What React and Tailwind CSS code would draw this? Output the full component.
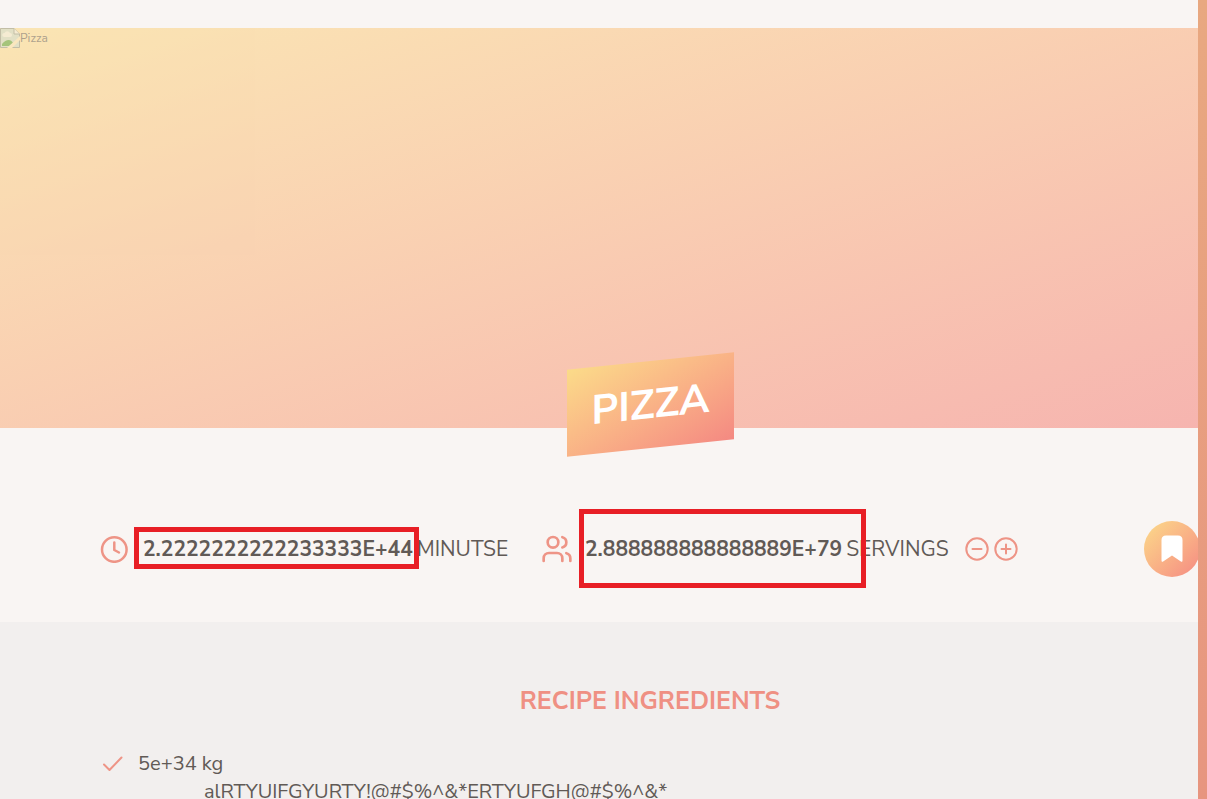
import { Users } from "lucide-react";

function BrokenImage() {
  return (
    <svg viewBox="0 0 20 20" className="h-5 w-5 shrink-0" aria-hidden="true">
      <path d="M.5.5H14L19.500 6v13.500H.5z" fill="#d3d3a8" stroke="#a09a74" />
      <path d="M4 9a2 2 0 0 1 .5-4 3 3 0 0 1 5.500 0 2 2 0 0 1 0 4z" fill="#f3e6bd" />
      <path d="M2 18v-2c4-5 9-5 11-1l-4 3z" fill="#6fa52c" />
      <path d="M20 8v4L12 20H7z" fill="#fbdf9c" />
      <path d="M14 .5V6h5.500" fill="#f3e6bd" stroke="#a09a74" />
    </svg>
  );
}

function ServingButton({ label, d }) {
  return (
    <button type="button" aria-label={label} className="h-6 w-6 text-[#ee9486]">
      <svg viewBox="0 0 24 24" className="h-6 w-6" fill="none" stroke="currentColor" strokeWidth="2" strokeLinecap="round">
        <circle cx="12" cy="12" r="10.700" />
        <path d={d} />
      </svg>
    </button>
  );
}

export default function App() {
  return (
    <div className="h-screen overflow-hidden bg-linear-to-b from-[#e8a880] to-[#e7957f] pr-[9px] font-['Nunito_Sans','Nunito','Lato',sans-serif] text-[#615a56]">
      <main className="h-full overflow-hidden bg-[#f9f5f3] pt-7">
        <figure className="relative h-[400px]">
          <div className="flex h-full items-start bg-linear-to-br from-[#fbdb89] to-[#f48982] opacity-60">
            <BrokenImage />
            <span className="pt-0.5 text-[12px] leading-4 text-[#7b6a4a]">Pizza</span>
          </div>
          <h1 className="absolute -bottom-5 left-[567px] flex h-[87px] w-[167px] -skew-y-6 items-center justify-center bg-linear-to-br from-[#fbdb89] to-[#f48982] text-[41px] font-bold text-white">
            PIZZA
          </h1>
        </figure>

        <section className="flex h-[194px] items-center pt-12 pl-[100px] text-[21px] leading-7">
          <div className="flex w-[441px] items-center">
            <svg viewBox="0 0 28 28" className="mr-[15px] h-7 w-7 text-[#ee9486]" fill="none" stroke="currentColor" strokeWidth="2.500" strokeLinecap="round" strokeLinejoin="round" aria-hidden="true">
              <circle cx="14.300" cy="14.500" r="12.300" />
              <path d="M14.300 7.500v7.500l4.700 2.500" />
            </svg>
            <span className="relative mr-1 font-bold">
              2.2222222222233333E+44
              <span className="absolute -top-2 -right-1.5 -bottom-1.5 -left-[9px] border-[5px] border-[#e81e25]" />
            </span>
            <span>MINUTSE</span>
          </div>
          <div className="flex w-[424px] items-center">
            <Users className="mr-3 h-8 w-8 text-[#ee9486]" strokeWidth={2} />
            <span className="relative mr-1 font-bold">
              2.888888888888889E+79
              <span className="absolute -top-[26px] -right-6 -bottom-[25px] -left-1.5 border-[5px] border-[#e81e25]" />
            </span>
            <span>SERVINGS</span>
          </div>
          <div className="flex gap-[5px]">
            <ServingButton label="Decrease servings" d="M7.500 12h9" />
            <ServingButton label="Increase servings" d="M7.500 12h9M12 7.500v9" />
          </div>
          <button type="button" aria-label="Bookmark recipe" className="-mr-0.5 ml-auto flex h-14 w-14 shrink-0 items-center justify-center rounded-full bg-linear-to-br from-[#fbdb89] to-[#f48982]">
            <svg viewBox="0 0 22 28" className="h-7 w-[22px]" fill="white" aria-hidden="true">
              <path d="M5 0.500H17Q21.500.5 21.500 5V25.500Q21.500 27.500 19.500 26.200L11 20.500 2.500 26.200Q.5 27.500.5 25.500V5Q.5.5 5 .5z" />
            </svg>
          </button>
        </section>

        <section className="h-full bg-[#f2efee] pt-[65px] pl-[102px]">
          <h2 className="text-center text-[25px] leading-7 font-bold text-[#ef9083]">RECIPE INGREDIENTS</h2>
          <ul className="mt-[35px] text-[20px] leading-7">
            <li className="flex">
              <svg viewBox="0 0 24 24" className="mt-0.5 mr-3 h-6 w-6 text-[#ee9486]" fill="none" stroke="currentColor" strokeWidth="2" strokeLinecap="round" strokeLinejoin="round" aria-hidden="true">
                <path d="M2 12.500l5.500 5.500L19.500 5.500" />
              </svg>
              <span className="w-[66px] whitespace-nowrap">5e+34 kg</span>
              <span className="pt-7">alRTYUIFGYURTY!@#$%^&amp;*ERTYUFGH@#$%^&amp;*</span>
            </li>
          </ul>
        </section>
      </main>
    </div>
  );
}
